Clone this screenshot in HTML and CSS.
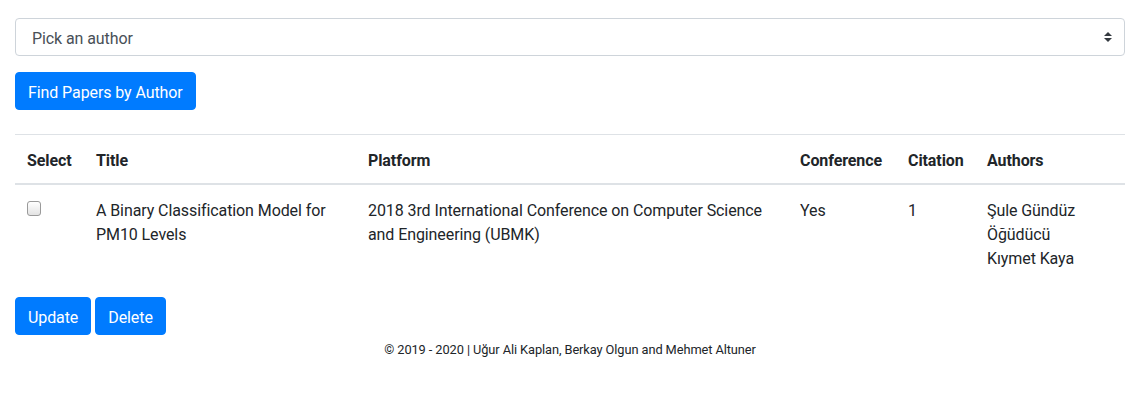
FILE: index.html
```html
<!DOCTYPE html>
<html lang="en">
<head>
<meta charset="utf-8">
<title>Papers</title>
<link rel="stylesheet" href="styles.css">
</head>
<body>
<main class="page">
  <div class="select-wrap">
    <select class="author-select">
      <option>Pick an author</option>
    </select>
    <svg class="select-arrow" width="8" height="10" viewBox="0 0 4 5" aria-hidden="true"><path d="M2 0L0 2h4zm0 5L0 3h4z" fill="#343a40"/></svg>
  </div>
  <div class="find-row">
    <button class="btn">Find Papers by Author</button>
  </div>
  <table class="papers">
    <colgroup>
      <col class="c-select">
      <col class="c-title">
      <col class="c-platform">
      <col class="c-conf">
      <col class="c-cit">
      <col class="c-auth">
    </colgroup>
    <thead>
      <tr>
        <th>Select</th>
        <th>Title</th>
        <th>Platform</th>
        <th>Conference</th>
        <th>Citation</th>
        <th>Authors</th>
      </tr>
    </thead>
    <tbody>
      <tr>
        <td><input type="checkbox" class="check"></td>
        <td>A Binary Classification Model for PM10 Levels</td>
        <td>2018 3rd International Conference on Computer Science and Engineering (UBMK)</td>
        <td>Yes</td>
        <td>1</td>
        <td>Şule Gündüz Öğüdücü<br>Kıymet Kaya</td>
      </tr>
    </tbody>
  </table>
  <div class="actions">
    <button class="btn">Update</button>
    <button class="btn">Delete</button>
  </div>
  <footer class="footer">© 2019 - 2020 | Uğur Ali Kaplan, Berkay Olgun and Mehmet Altuner</footer>
</main>
</body>
</html>
```
FILE: styles.css
```css
html, body {
  margin: 0;
  padding: 0;
  background: #fff;
}
body {
  font-family: Roboto, "Liberation Sans", Arial, sans-serif;
  font-size: 16px;
  line-height: 1.5;
  letter-spacing: -0.09px;
  color: #212529;
}
.page {
  padding: 18px 15px 0;
}
.select-wrap {
  position: relative;
  margin-bottom: 16px;
}
.author-select {
  display: block;
  width: 100%;
  height: 38px;
  box-sizing: border-box;
  padding: 8px 28px 4px 16px;
  font-family: inherit;
  font-size: 16px;
  line-height: 24px;
  letter-spacing: -0.09px;
  color: #495057;
  background: #fff;
  border: 1px solid #ced4da;
  border-radius: 4px;
  -webkit-appearance: none;
  appearance: none;
}
.select-arrow {
  position: absolute;
  right: 13px;
  top: 14px;
  pointer-events: none;
}
.btn {
  display: inline-block;
  font-family: inherit;
  font-size: 16px;
  line-height: 24px;
  letter-spacing: -0.09px;
  padding: 8px 12px 4px;
  color: #fff;
  background: #007bff;
  border: 1px solid #007bff;
  border-radius: 4px;
  cursor: pointer;
}
.find-row {
  margin-bottom: 24px;
}
.papers {
  width: 100%;
  border-collapse: collapse;
  table-layout: fixed;
  margin-bottom: 16px;
}
.c-select { width: 69px; }
.c-title { width: 272px; }
.c-platform { width: 432px; }
.c-conf { width: 108px; }
.c-cit { width: 79px; }
.c-auth { width: 150px; }
.papers th,
.papers td {
  padding: 14px 12px 10px;
  text-align: left;
  vertical-align: top;
}
.papers th {
  font-weight: 700;
  border-top: 1px solid #dee2e6;
  border-bottom: 2px solid #dee2e6;
}
.check {
  -webkit-appearance: none;
  appearance: none;
  display: block;
  box-sizing: border-box;
  margin: 2px 0 0 0;
  width: 14px;
  height: 15px;
  border: 1px solid #9a9a9a;
  border-radius: 3px;
  background: linear-gradient(#ffffff, #e3e3e3);
}
.actions {
  display: flex;
  gap: 4px;
}
.footer {
  text-align: center;
  font-size: 12.8px;
  line-height: 19px;
  letter-spacing: -0.08px;
  margin-top: 5px;
}
```
